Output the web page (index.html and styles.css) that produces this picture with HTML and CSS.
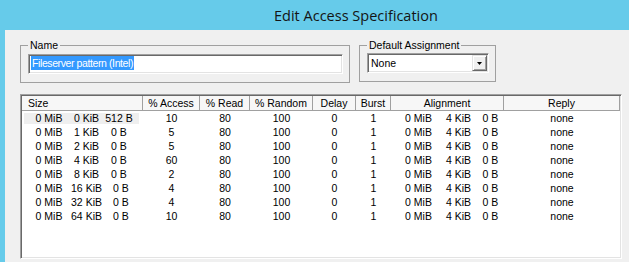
FILE: index.html
```html
<!DOCTYPE html>
<html>
<head>
<meta charset="utf-8">
<link rel="stylesheet" href="styles.css">
</head>
<body>
<div class="window">
  <div class="titlebar"><span class="title">Edit Access Specification</span></div>
  <div class="client">
    <div class="top-row">
      <fieldset class="group group-name">
        <legend>Name</legend>
        <div class="textbox"><span class="sel">Fileserver pattern (Intel)</span></div>
      </fieldset>
      <fieldset class="group group-default">
        <legend>Default Assignment</legend>
        <div class="combo">
          <span class="combo-text">None</span>
          <span class="combo-btn"><svg width="5" height="3" viewBox="0 0 5 3"><path d="M0 0H5L2.5 3Z" fill="#000"/></svg></span>
        </div>
      </fieldset>
    </div>
    <div class="listview">
      <div class="lv-header">
        <div class="hcell left">Size</div>
        <div class="hcell">% Access</div>
        <div class="hcell">% Read</div>
        <div class="hcell">% Random</div>
        <div class="hcell">Delay</div>
        <div class="hcell">Burst</div>
        <div class="hcell">Alignment</div>
        <div class="hcell">Reply</div>
      </div>
      <div class="lv-body">
        <div class="row">
          <div class="cell size"><div class="focus"><span>0 MiB</span><span>0 KiB</span><span>512 B</span></div></div>
          <div class="cell">10</div><div class="cell">80</div><div class="cell">100</div><div class="cell">0</div><div class="cell">1</div>
          <div class="cell align"><span>0 MiB</span><span>4 KiB</span><span>0 B</span></div>
          <div class="cell">none</div>
        </div>
        <div class="row">
          <div class="cell size"><div class="sub"><span>0 MiB</span><span>1 KiB</span><span>0 B</span></div></div>
          <div class="cell">5</div><div class="cell">80</div><div class="cell">100</div><div class="cell">0</div><div class="cell">1</div>
          <div class="cell align"><span>0 MiB</span><span>4 KiB</span><span>0 B</span></div>
          <div class="cell">none</div>
        </div>
        <div class="row">
          <div class="cell size"><div class="sub"><span>0 MiB</span><span>2 KiB</span><span>0 B</span></div></div>
          <div class="cell">5</div><div class="cell">80</div><div class="cell">100</div><div class="cell">0</div><div class="cell">1</div>
          <div class="cell align"><span>0 MiB</span><span>4 KiB</span><span>0 B</span></div>
          <div class="cell">none</div>
        </div>
        <div class="row">
          <div class="cell size"><div class="sub"><span>0 MiB</span><span>4 KiB</span><span>0 B</span></div></div>
          <div class="cell">60</div><div class="cell">80</div><div class="cell">100</div><div class="cell">0</div><div class="cell">1</div>
          <div class="cell align"><span>0 MiB</span><span>4 KiB</span><span>0 B</span></div>
          <div class="cell">none</div>
        </div>
        <div class="row">
          <div class="cell size"><div class="sub"><span>0 MiB</span><span>8 KiB</span><span>0 B</span></div></div>
          <div class="cell">2</div><div class="cell">80</div><div class="cell">100</div><div class="cell">0</div><div class="cell">1</div>
          <div class="cell align"><span>0 MiB</span><span>4 KiB</span><span>0 B</span></div>
          <div class="cell">none</div>
        </div>
        <div class="row">
          <div class="cell size"><div class="sub wide"><span>0 MiB</span><span>16 KiB</span><span>0 B</span></div></div>
          <div class="cell">4</div><div class="cell">80</div><div class="cell">100</div><div class="cell">0</div><div class="cell">1</div>
          <div class="cell align"><span>0 MiB</span><span>4 KiB</span><span>0 B</span></div>
          <div class="cell">none</div>
        </div>
        <div class="row">
          <div class="cell size"><div class="sub wide"><span>0 MiB</span><span>32 KiB</span><span>0 B</span></div></div>
          <div class="cell">4</div><div class="cell">80</div><div class="cell">100</div><div class="cell">0</div><div class="cell">1</div>
          <div class="cell align"><span>0 MiB</span><span>4 KiB</span><span>0 B</span></div>
          <div class="cell">none</div>
        </div>
        <div class="row">
          <div class="cell size"><div class="sub wide"><span>0 MiB</span><span>64 KiB</span><span>0 B</span></div></div>
          <div class="cell">10</div><div class="cell">80</div><div class="cell">100</div><div class="cell">0</div><div class="cell">1</div>
          <div class="cell align"><span>0 MiB</span><span>4 KiB</span><span>0 B</span></div>
          <div class="cell">none</div>
        </div>
      </div>
    </div>
  </div>
</div>
</body>
</html>
```
FILE: styles.css
```css
html, body {
  margin: 0;
  padding: 0;
}
body {
  background: #66cbea;
  font-family: "Liberation Sans", Arial, sans-serif;
  font-size: 10.5px;
  color: #000;
}
.window {
  width: 629px;
  height: 262px;
  display: flex;
  flex-direction: column;
  overflow: hidden;
}
.titlebar {
  height: 30px;
  flex: none;
  display: flex;
  align-items: center;
  padding-left: 274px;
  box-sizing: border-box;
  font-family: "Open Sans", "Noto Sans", sans-serif;
  font-size: 14.5px;
  color: #141414;
}
.client {
  flex: 1;
  margin-left: 5px;
  background: #f0f0f0;
  padding: 9px 0 0 15px;
}
.top-row {
  display: flex;
  gap: 9px;
  align-items: flex-start;
}
.group {
  margin: 0;
  padding: 0 6px 8px 7px;
  border: 1px solid #a0a0a0;
  box-sizing: border-box;
  min-width: 0;
}
.group legend {
  padding: 0 2px;
  line-height: 13px;
  font-size: 10.5px;
}
.group-name {
  width: 330px;
}
.group-default {
  width: 137px;
}
.textbox {
  margin-top: 2px;
  width: 315px;
  height: 20px;
  box-sizing: border-box;
  background: #fff;
  border: 1px solid;
  border-color: #a0a0a0 #fff #fff #a0a0a0;
  box-shadow: inset 1px 1px 0 #696969, inset -1px -1px 0 #e3e3e3;
  padding: 1px 0 0 2px;
}
.sel {
  display: inline-block;
  background: #3399ff;
  color: #fff;
  line-height: 14px;
  padding: 0 1px;
  letter-spacing: -0.4px;
}
.combo {
  margin-top: 1px;
  width: 122px;
  height: 20px;
  box-sizing: border-box;
  background: #fff;
  border: 1px solid;
  border-color: #a0a0a0 #fff #fff #a0a0a0;
  box-shadow: inset 1px 1px 0 #696969, inset -1px -1px 0 #e3e3e3;
  padding: 1px;
  display: flex;
}
.combo-text {
  flex: 1;
  line-height: 16px;
  padding-left: 2px;
}
.combo-btn {
  width: 15px;
  height: 16px;
  box-sizing: border-box;
  background: #f0f0f0;
  border: 1px solid;
  border-color: #e3e3e3 #696969 #696969 #e3e3e3;
  box-shadow: inset 1px 1px 0 #fff, inset -1px -1px 0 #a0a0a0;
  display: flex;
  align-items: center;
  justify-content: center;
}
.listview {
  margin-top: 11px;
  width: 602px;
  height: 165px;
  box-sizing: border-box;
  background: #fff;
  border: 1px solid;
  border-color: #a0a0a0 #fff #fff #a0a0a0;
  box-shadow: inset 1px 1px 0 #696969, inset -1px -1px 0 #e3e3e3;
  padding: 1px;
}
.lv-header,
.row {
  display: grid;
  grid-template-columns: 121px 57px 50px 63px 43px 35px 113px 116px;
}
.lv-header {
  height: 14px;
  background: #f7f7f7;
  border-bottom: 1px solid #a0a0a0;
  box-sizing: content-box;
}
.hcell {
  border-right: 1px solid #a0a0a0;
  line-height: 14px;
  text-align: center;
  white-space: nowrap;
}
.hcell.left {
  text-align: left;
  padding-left: 6px;
}
.row {
  height: 14px;
}
.cell {
  line-height: 14px;
  text-align: center;
  white-space: nowrap;
}
.cell.size,
.cell.align {
  text-align: left;
}
.focus,
.sub {
  display: grid;
  grid-template-columns: 38px 37px 28px;
  padding-left: 8px;
}
.sub.wide {
  grid-template-columns: 38px 37px 32px;
}
.focus {
  background: #efefef;
  margin: 2px 4px 1px 2px;
  padding-left: 6px;
  line-height: 11px;
  height: 11px;
}
.focus span {
  line-height: 11px;
}
.focus span,
.sub span,
.cell.align span {
  text-align: center;
}
.cell.align {
  display: grid;
  grid-template-columns: 39px 41px 23px;
  padding-left: 8px;
}
```
